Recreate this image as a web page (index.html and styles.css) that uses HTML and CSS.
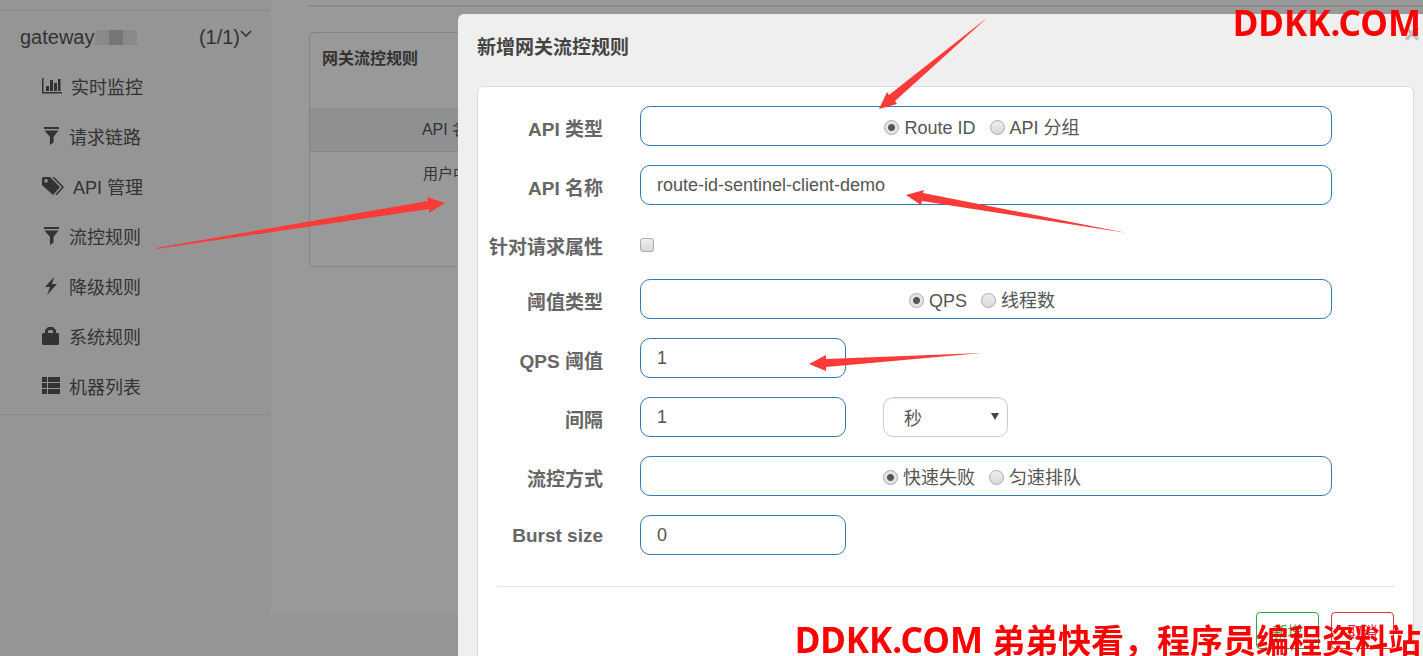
FILE: index.html
```html
<!DOCTYPE html>
<html lang="zh-CN">
<head>
  <meta charset="UTF-8">
  <meta name="viewport" content="width=device-width, initial-scale=1.0">
  <title>网关流控规则</title>
  <link rel="stylesheet" href="styles.css">
</head>
<body>
  <div class="layout">
    <aside class="sidebar">
      <div class="app-header">
        <span class="app-name">gateway</span>
        <span class="mask"><i></i><i></i><i></i></span>
        <span class="app-count">(1/1)</span>
        <svg class="caret" width="12" height="8" viewBox="0 0 12 8"><path d="M1 1l5 5 5-5" fill="none" stroke="currentColor" stroke-width="1.6"/></svg>
      </div>
      <nav class="menu">
        <a href="#">
          <svg width="20" height="18" viewBox="0 0 20 18"><path d="M0 1h1.5v14H20v1.500H0zM4 9h3v5H4zM8 3h3v11H8zM12 6h3v8h-3zM16 2h2.500v12H16z"/></svg>
          实时监控
        </a>
        <a href="#">
          <svg width="18" height="18" viewBox="0 0 18 18"><path d="M2 0h15v2H2zM2.500 3.500h14L11.500 10v5.500L8 18v-8z"/></svg>
          请求链路
        </a>
        <a href="#">
          <svg width="22" height="18" viewBox="0 0 22 18"><path fill-rule="evenodd" d="M1 0h7l10 10-7 8L0 8V1zM4 2a1.8 1.8 0 1 0 .1 0z"/><path d="M11 0l10 10-7 8" fill="none" stroke="currentColor" stroke-width="1.5"/></svg>
          API 管理
        </a>
        <a href="#">
          <svg width="18" height="18" viewBox="0 0 18 18"><path d="M2 0h15v2H2zM2.500 3.500h14L11.500 10v5.500L8 18v-8z"/></svg>
          流控规则
        </a>
        <a href="#">
          <svg width="18" height="18" viewBox="0 0 18 18"><path d="M12 0L3 10h5l-3 8L15 7h-5z"/></svg>
          降级规则
        </a>
        <a href="#">
          <svg width="18" height="18" viewBox="0 0 18 18"><path fill-rule="evenodd" d="M3 6V3l3-3h5l3 3v3h2l1 1v10l-1 1H1l-1-1V7l1-1zM6 6h5V4l-1-1H7L6 4z"/></svg>
          系统规则
        </a>
        <a href="#">
          <svg width="18" height="18" viewBox="0 0 18 18"><path d="M0 0h5v5H0zM6 0h12v5H6zM0 6h5v5H0zM6 6h12v5H6zM0 12h5v5H0zM6 12h12v5H6z"/></svg>
          机器列表
        </a>
      </nav>
    </aside>

    <main class="content">
      <section class="panel">
        <h2>网关流控规则</h2>
        <table>
          <thead><tr><th>API 名称</th><td></td></tr></thead>
          <tbody><tr><td>用户中心</td><td></td></tr></tbody>
        </table>
      </section>
    </main>
  </div>

  <div class="overlay">
    <div class="dialog" role="dialog" aria-labelledby="dialogTitle">
      <button class="close" type="button" aria-label="关闭">×</button>
      <h1 id="dialogTitle">新增网关流控规则</h1>
      <form class="card">
        <div class="row">
          <span class="label" id="apiType">API 类型</span>
          <div class="box" role="radiogroup" aria-labelledby="apiType">
            <label><input type="radio" name="apiType" checked> Route ID</label>
            <label><input type="radio" name="apiType"> API 分组</label>
          </div>
        </div>
        <div class="row">
          <label class="label" for="apiName">API 名称</label>
          <input class="box" type="text" id="apiName" value="route-id-sentinel-client-demo">
        </div>
        <div class="row row-check">
          <label class="label" for="byAttr">针对请求属性</label>
          <input type="checkbox" id="byAttr">
        </div>
        <div class="row">
          <span class="label" id="gradeType">阈值类型</span>
          <div class="box" role="radiogroup" aria-labelledby="gradeType">
            <label><input type="radio" name="grade" checked> QPS</label>
            <label><input type="radio" name="grade"> 线程数</label>
          </div>
        </div>
        <div class="row">
          <label class="label" for="count">QPS 阈值</label>
          <input class="box short" type="text" id="count" value="1">
        </div>
        <div class="row">
          <label class="label" for="interval">间隔</label>
          <div class="pair">
            <input class="box short" type="text" id="interval" value="1">
            <div class="select-wrap">
              <select aria-label="间隔单位">
                <option>秒</option>
              </select>
            </div>
          </div>
        </div>
        <div class="row">
          <span class="label" id="behavior">流控方式</span>
          <div class="box" role="radiogroup" aria-labelledby="behavior">
            <label><input type="radio" name="behavior" checked> 快速失败</label>
            <label><input type="radio" name="behavior"> 匀速排队</label>
          </div>
        </div>
        <div class="row">
          <label class="label" for="burst">Burst size</label>
          <input class="box short" type="text" id="burst" value="0">
        </div>
        <div class="actions">
          <button class="btn-add" type="button">新增</button>
          <button class="btn-cancel" type="button">取消</button>
        </div>
      </form>
    </div>
  </div>

  <!-- red arrows pointing at the steps -->
  <svg class="arrows" width="1423" height="656" viewBox="0 0 1423 656">
    <path d="M156 248L428 201 427 197 445 203 429 213V209L156 249z"/>
    <path d="M988 17L895 101 897 104 879 109 887 92 889 95z"/>
    <path d="M1127 233L922 201 921 205 906 195 924 190 923 193z"/>
    <path d="M982 353L826 367V371L809 364 826 355V359z"/>
  </svg>

  <div class="mark mark-top">DDKK.COM</div>
  <div class="mark mark-bottom">DDKK.COM <span>弟弟快看，程序员编程资料站</span></div>
</body>
</html>
```
FILE: styles.css
```css
* {
  margin: 0;
  padding: 0;
  box-sizing: border-box;
}
body {
  font-family: "Liberation Sans", "Noto Sans CJK SC", sans-serif;
  font-size: 18px;
  color: #555;
  background: #f8f8f8;
  height: 100vh;
  overflow: hidden;
}
input, select, button {
  font: inherit;
  color: inherit;
}

/* page behind the dialog */
.layout {
  display: flex;
  align-items: flex-start;
}
.sidebar {
  width: 271px;
  flex: none;
  margin-top: 10px;
  border-top: 1px solid #e7e7e7;
  border-bottom: 1px solid #e7e7e7;
  padding-bottom: 2px;
}
.app-header {
  display: flex;
  align-items: center;
  height: 51px;
  padding: 2px 19px 0 20px;
  font-size: 20px;
}
.mask {
  display: flex;
}
.mask i {
  width: 14px;
  height: 15px;
  background: #e4e4e4;
}
.mask i:nth-child(2) {
  background: #c8c5c3;
}
.app-count {
  margin-left: auto;
}
.caret {
  margin-bottom: 8px;
}
.menu a {
  display: flex;
  align-items: center;
  gap: 9px;
  height: 50px;
  padding: 0 0 2px 42px;
  color: #555;
  text-decoration: none;
}
.menu svg {
  fill: currentColor;
}
.content {
  flex: 1;
  min-height: calc(100vh - 42px);
  padding: 5px 0 0 38px;
  background: #fff;
}
.content::before {
  content: "";
  display: block;
  height: 2px;
  margin-bottom: 25px;
  background: #e5e5e5;
}
.panel {
  height: 235px;
  border: 1px solid #ddd;
  border-radius: 5px;
}
.panel h2 {
  height: 75px;
  padding: 14px 12px;
  font-size: 16px;
  line-height: 24px;
}
table {
  width: 100%;
  border-collapse: collapse;
  font-size: 15px;
  text-align: center;
}
thead {
  height: 43px;
  background: #eef1f4;
  border-bottom: 1px solid #ddd;
  font-size: 16px;
}
th {
  width: 286px;
  padding-bottom: 2px;
  font-weight: normal;
}
tbody {
  height: 42px;
}

/* dialog */
.overlay {
  position: fixed;
  inset: 0;
  padding: 14px 0 0 458px;
  background: rgba(0, 0, 0, 0.4);
  overflow: hidden;
}
.dialog {
  position: relative;
  min-height: 100%;
  padding: 0 9px 19px 19px;
  background: #efefef;
  border-radius: 6px 0 0 6px;
}
.dialog h1 {
  height: 72px;
  font-size: 19px;
  line-height: 67px;
  color: #444;
}
.close {
  position: absolute;
  top: 6px;
  right: 3px;
  border: none;
  background: none;
  font-size: 28px;
  font-weight: bold;
  line-height: 28px;
  color: #bbb;
}
.card {
  padding: 19px 0;
  background: #fff;
  border: 1px solid #ddd;
  border-radius: 6px;
}
.row {
  display: grid;
  grid-template-columns: 125px 1fr;
  column-gap: 37px;
  align-items: center;
  height: 40px;
  margin: 0 81px 19px 0;
}
.row-check {
  height: 36px;
}
.label {
  padding-top: 2px;
  font-size: 19px;
  font-weight: bold;
  text-align: right;
  white-space: nowrap;
  color: #666;
}
.row-check .label {
  padding-top: 6px;
}
.box {
  width: 100%;
  height: 40px;
  padding: 0 16px;
  background: #fff;
  border: 1px solid #337ab7;
  border-radius: 10px;
}
div.box {
  display: flex;
  justify-content: center;
  align-items: center;
  gap: 14px;
  padding: 4px 24px 0 16px;
}
div.box label {
  display: flex;
  align-items: center;
  gap: 5px;
  line-height: 26px;
}
.box.short {
  width: 206px;
}
input[type="radio"],
input[type="checkbox"] {
  appearance: none;
  width: 15px;
  height: 15px;
  border: 1px solid #aaa;
  border-radius: 50%;
  background: linear-gradient(#eee, #d8d8d8);
}
input[type="radio"] {
  margin-bottom: 2px;
}
input[type="radio"]:checked {
  background: radial-gradient(circle, #555 3px, #e4e4e4 4px);
}
input[type="checkbox"] {
  width: 14px;
  height: 14px;
  margin-top: 6px;
  border-radius: 3px;
}
.pair {
  display: flex;
  gap: 37px;
}
.select-wrap {
  position: relative;
  width: 125px;
}
.select-wrap::after {
  content: "";
  position: absolute;
  top: 16px;
  right: 9px;
  border: 4px solid transparent;
  border-top: 7px solid #444;
  border-bottom: none;
  pointer-events: none;
}
select {
  appearance: none;
  width: 100%;
  height: 40px;
  padding: 4px 20px 0;
  background: #fff;
  border: 1px solid #ccc;
  border-radius: 10px;
  box-shadow: inset 0 1px 1px rgba(0, 0, 0, 0.08);
}
.actions {
  display: flex;
  justify-content: flex-end;
  gap: 12px;
  margin: 31px 19px 0;
  padding-top: 25px;
  border-top: 1px solid #e5e5e5;
}
.actions button {
  width: 63px;
  height: 37px;
  background: #fff;
  border: 1px solid;
  border-radius: 4px;
  font-size: 15px;
}
.actions .btn-add {
  color: #28a745;
}
.actions .btn-cancel {
  color: #dc3545;
}

/* things drawn over everything */
.arrows {
  position: absolute;
  top: 0;
  left: 0;
  fill: #fc3b39;
  pointer-events: none;
}
.mark {
  position: absolute;
  right: 2px;
  font-family: "Noto Sans", "Noto Sans CJK SC", sans-serif;
  font-size: 35px;
  font-weight: bold;
  line-height: 48px;
  white-space: nowrap;
  color: #f00;
  pointer-events: none;
}
.mark span {
  font-size: 33px;
}
.mark-top {
  top: -1px;
}
.mark-bottom {
  bottom: -9px;
}
```
